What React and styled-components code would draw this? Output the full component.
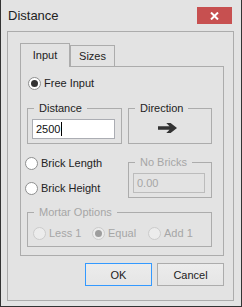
import styled, { createGlobalStyle } from "styled-components";

const GlobalStyle = createGlobalStyle`
  html, body {
    margin: 0;
    padding: 0;
    background: #e3e3e3;
  }
  body {
    font-family: "Liberation Sans", Arial, sans-serif;
    font-size: 11px;
    color: #1e1e1e;
  }
`;

const Window = styled.div`
  width: 242px;
  height: 307px;
  box-sizing: border-box;
  border: 1px solid #333;
  border-top: none;
  background: #e3e3e3;
  display: flex;
  flex-direction: column;
`;

const TitleBar = styled.div`
  height: 31px;
  flex-shrink: 0;
  display: flex;
  align-items: flex-start;
`;

const Title = styled.div`
  font-size: 13px;
  line-height: 15px;
  padding: 8px 0 0 7px;
  color: #222;
`;

const CloseButton = styled.div`
  margin: 7px 9px 0 auto;
  width: 35px;
  height: 17px;
  background: #c75050;
  display: flex;
  align-items: center;
  justify-content: center;
`;

const Panel = styled.div`
  height: 270px;
  box-sizing: border-box;
  margin: 0 7px 0 6px;
  border: 1px solid #acacac;
  padding: 11px 9px 0 12px;
  display: flex;
  flex-direction: column;
`;

const TabStrip = styled.div`
  height: 23px;
  display: flex;
  align-items: flex-start;
`;

const Tab = styled.div`
  position: relative;
  box-sizing: border-box;
  width: ${(p) => p.$w}px;
  height: ${(p) => (p.$active ? 24 : 21)}px;
  margin-top: ${(p) => (p.$active ? 0 : 2)}px;
  border: 1px solid #acacac;
  border-bottom: none;
  background: #e3e3e3;
  z-index: ${(p) => (p.$active ? 1 : 0)};
  display: flex;
  align-items: center;
  justify-content: center;
  padding-bottom: ${(p) => (p.$active ? 1 : 0)}px;
  color: #222;
`;

const Pane = styled.div`
  width: 204px;
  height: 190px;
  box-sizing: border-box;
  border: 1px solid #acacac;
  padding: 0 11px 0 6px;
  display: flex;
  flex-direction: column;
`;

const RadioRow = styled.div`
  display: flex;
  align-items: center;
  height: 13px;
  line-height: 13px;
  margin-top: ${(p) => p.$top || 0}px;
  margin-left: ${(p) => p.$left || 0}px;
  width: ${(p) => (p.$w ? `${p.$w}px` : "auto")};
  color: ${(p) => (p.$disabled ? "#a6a6a6" : "#222")};
`;

const Circle = styled.span`
  width: 13px;
  height: 13px;
  box-sizing: border-box;
  border-radius: 50%;
  border: 1px solid ${(p) => (p.$disabled ? "#cbcbcb" : "#8e8f8f")};
  background: ${(p) => (p.$disabled ? "#ececec" : "#fff")};
  margin-right: 3px;
  display: flex;
  align-items: center;
  justify-content: center;
  flex-shrink: 0;

  &::after {
    content: "";
    display: ${(p) => (p.$checked ? "block" : "none")};
    width: 7px;
    height: 7px;
    border-radius: 50%;
    background: ${(p) => (p.$disabled ? "#9d9d9d" : "#333")};
  }
`;

const GroupRow = styled.div`
  display: flex;
  gap: 6px;
  margin-top: ${(p) => p.$top || 0}px;
`;

const Group = styled.fieldset`
  margin: 0;
  padding: 0;
  min-width: 0;
  border: 1px solid #acacac;
  width: ${(p) => p.$w}px;
  box-sizing: border-box;
  flex-shrink: 0;
`;

const Legend = styled.legend`
  margin-left: 6px;
  padding: 0 5px;
  font-size: 11px;
  line-height: 12px;
  color: ${(p) => (p.$disabled ? "#a6a6a6" : "#222")};
`;

const GroupBody = styled.div`
  padding: ${(p) => p.$pad};
  display: flex;
  align-items: center;
`;

const TextBox = styled.div`
  width: ${(p) => p.$w}px;
  height: 20px;
  box-sizing: border-box;
  border: 1px solid ${(p) => (p.$disabled ? "#bcbcbc" : "#abadb3")};
  background: ${(p) => (p.$disabled ? "#e3e3e3" : "#fff")};
  color: ${(p) => (p.$disabled ? "#a6a6a6" : "#111")};
  padding-left: 3px;
  display: flex;
  align-items: center;
  line-height: 14px;
`;

const Caret = styled.span`
  display: inline-block;
  width: 1px;
  height: 14px;
  background: #000;
  margin-left: 1px;
`;

const SideColumn = styled.div`
  flex: 1;
  display: flex;
  flex-direction: column;
  margin-left: -2px;
`;

const ButtonRow = styled.div`
  width: 204px;
  margin-top: 7px;
  display: flex;
  justify-content: flex-end;
  gap: 5px;
`;

const Button = styled.div`
  width: 67px;
  height: 23px;
  box-sizing: border-box;
  border: 1px solid ${(p) => (p.$default ? "#3399ff" : "#acacac")};
  background: linear-gradient(#ececec, #e5e5e5);
  display: flex;
  align-items: center;
  justify-content: center;
  color: #222;
`;

const Arrow = () => (
  <svg width="20" height="10" viewBox="0 0 20 10">
    <path d="M0 3.3H11.5L8.3 0H12.6L19 5L12.6 10H8.3L11.5 6.7H0Z" fill="#333" />
  </svg>
);

const Radio = ({ label, checked, disabled, top, left, w }) => (
  <RadioRow $top={top} $left={left} $w={w} $disabled={disabled}>
    <Circle $checked={checked} $disabled={disabled} />
    {label}
  </RadioRow>
);

export default function App() {
  return (
    <>
      <GlobalStyle />
      <Window>
        <TitleBar>
          <Title>Distance</Title>
          <CloseButton>
            <svg width="9" height="8" viewBox="0 0 9 8">
              <path d="M1 0.5L8 7.5M8 0.5L1 7.5" stroke="#fff" strokeWidth="2" />
            </svg>
          </CloseButton>
        </TitleBar>
        <Panel>
          <TabStrip>
            <Tab $active $w={50}>Input</Tab>
            <Tab $w={45}>Sizes</Tab>
          </TabStrip>
          <Pane>
            <Radio label="Free Input" checked top={10} left={1} />
            <GroupRow $top={12}>
              <Group $w={95}>
                <Legend>Distance</Legend>
                <GroupBody $pad="5px 0 4px 4px">
                  <TextBox $w={83}>
                    2500
                    <Caret />
                  </TextBox>
                </GroupBody>
              </Group>
              <Group $w={84}>
                <Legend>Direction</Legend>
                <GroupBody $pad="9px 0 0 29px">
                  <Arrow />
                </GroupBody>
              </Group>
            </GroupRow>
            <GroupRow $top={12}>
              <SideColumn>
                <Radio label="Brick Length" top={1} />
                <Radio label="Brick Height" top={12} />
              </SideColumn>
              <Group $w={84}>
                <Legend $disabled>No Bricks</Legend>
                <GroupBody $pad="5px 0 4px 4px">
                  <TextBox $w={72} $disabled>
                    0.00
                  </TextBox>
                </GroupBody>
              </Group>
            </GroupRow>
            <GroupRow $top={8}>
              <Group $w={185}>
                <Legend $disabled>Mortar Options</Legend>
                <GroupBody $pad="9px 0 6px 5px">
                  <Radio label="Less 1" disabled w={59} />
                  <Radio label="Equal" disabled checked w={56} />
                  <Radio label="Add 1" disabled />
                </GroupBody>
              </Group>
            </GroupRow>
          </Pane>
          <ButtonRow>
            <Button $default>OK</Button>
            <Button>Cancel</Button>
          </ButtonRow>
        </Panel>
      </Window>
    </>
  );
}
